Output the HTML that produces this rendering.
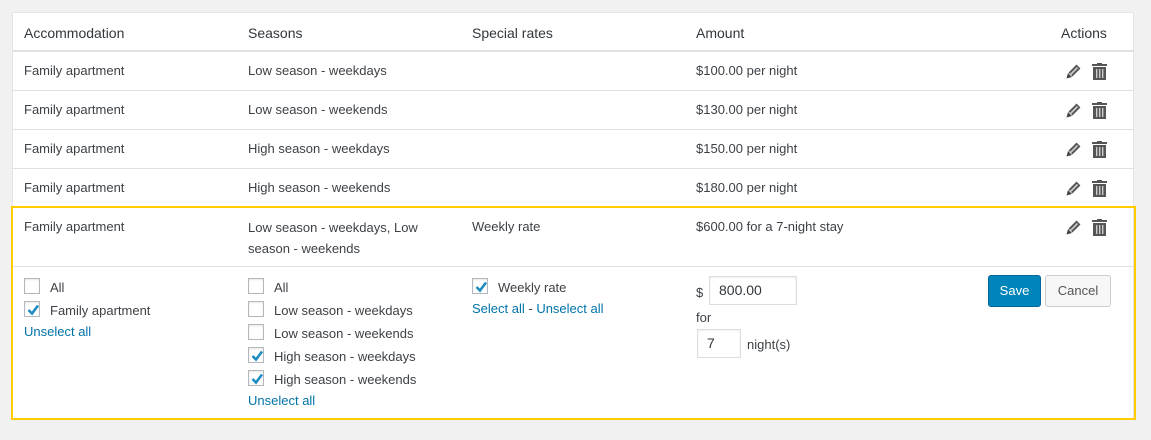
<!DOCTYPE html>
<html><head><meta charset="utf-8"><style>
*{margin:0;padding:0;box-sizing:border-box}
body{width:1151px;height:440px;background:#f1f1f1;font-family:"Liberation Sans",sans-serif;color:#3c4146;font-size:13px;position:relative;overflow:hidden}
.t{position:absolute;white-space:nowrap;line-height:18px}
.tbl{position:absolute;left:12px;top:12px;width:1122px;height:408px;background:#fff;border:1px solid #e5e5e5}
.hl{position:absolute;left:12px;width:1122px;height:1px;background:#e1e1e1}
.h{font-size:14px;color:#32373c}
.cb{position:absolute;width:16px;height:16px;border:1px solid #b4b9be;background:#fff;box-shadow:inset 0 1px 2px rgba(0,0,0,.1)}
.cb svg{position:absolute;left:1px;top:1px}
a{color:#0073aa;text-decoration:none}
.inp{position:absolute;border:1px solid #ddd;background:#fff;box-shadow:inset 0 1px 2px rgba(0,0,0,.07);font-size:14px;padding-left:9px;line-height:26px;color:#32373c}
.btn{position:absolute;border-radius:3px;font-size:13px;text-align:center;line-height:28px}
</style></head><body>
<div class="tbl"></div>
<div class="hl" style="top:50px;height:2px;background:#e1e1e1"></div>
<div class="hl" style="top:90px"></div>
<div class="hl" style="top:129px"></div>
<div class="hl" style="top:168px"></div>
<div style="position:absolute;left:11px;top:206px;width:1125px;height:214px;border:2px solid #fc0"></div>
<div class="hl" style="top:266px;left:13px;width:1121px"></div>

<div class="t h" style="left:24px;top:24px">Accommodation</div>
<div class="t h" style="left:248px;top:24px">Seasons</div>
<div class="t h" style="left:472px;top:24px">Special rates</div>
<div class="t h" style="left:696px;top:24px">Amount</div>
<div class="t h" style="left:1061px;top:24px">Actions</div>

<div class="t" style="left:24px;top:62px">Family apartment</div><div class="t" style="left:248px;top:62px">Low season - weekdays</div><div class="t" style="left:696px;top:62px">$100.00 per night</div>
<div class="t" style="left:24px;top:101px">Family apartment</div><div class="t" style="left:248px;top:101px">Low season - weekends</div><div class="t" style="left:696px;top:101px">$130.00 per night</div>
<div class="t" style="left:24px;top:140px">Family apartment</div><div class="t" style="left:248px;top:140px">High season - weekdays</div><div class="t" style="left:696px;top:140px">$150.00 per night</div>
<div class="t" style="left:24px;top:179px">Family apartment</div><div class="t" style="left:248px;top:179px">High season - weekends</div><div class="t" style="left:696px;top:179px">$180.00 per night</div>
<div class="t" style="left:24px;top:218px">Family apartment</div>
<div class="t" style="left:248px;top:217px;line-height:21px">Low season - weekdays, Low<br>season - weekends</div>
<div class="t" style="left:472px;top:218px">Weekly rate</div>
<div class="t" style="left:696px;top:218px">$600.00 for a 7-night stay</div>

<svg width="0" height="0" style="position:absolute"><defs>
<g id="ic">
<line x1="4.5" y1="11.5" x2="12.5" y2="3.5" stroke="#555" stroke-width="5.5"/>
<line x1="4.5" y1="11.5" x2="11.5" y2="4.5" stroke="#ccc" stroke-width="1.6"/>
<path d="M0.5 15.5 L2 10 L6 14Z" fill="#444"/>
<g transform="translate(26,-1)"><rect x="0" y="2" width="15" height="2" fill="#555"/><rect x="5" y="0" width="5" height="3" fill="#555"/><path d="M1 5 H14 V18 H1Z" fill="#555"/><rect x="4" y="7" width="1.4" height="9" fill="#ccc"/><rect x="7" y="7" width="1.4" height="9" fill="#ccc"/><rect x="10" y="7" width="1.4" height="9" fill="#ccc"/></g>
</g>
<path id="ck" d="M2.5 7 L6 10.5 L12 2.5" stroke="#1e8cbe" stroke-width="2.6" fill="none"/>
</defs></svg>
<svg style="position:absolute;left:1066px;top:63px" width="45" height="20"><use href="#ic"/></svg>
<svg style="position:absolute;left:1066px;top:102px" width="45" height="20"><use href="#ic"/></svg>
<svg style="position:absolute;left:1066px;top:141px" width="45" height="20"><use href="#ic"/></svg>
<svg style="position:absolute;left:1066px;top:180px" width="45" height="20"><use href="#ic"/></svg>
<svg style="position:absolute;left:1066px;top:219px" width="45" height="20"><use href="#ic"/></svg>

<div class="cb" style="left:24px;top:278px"></div><div class="t" style="left:50px;top:279px">All</div>
<div class="cb" style="left:24px;top:301px"><svg width="14" height="14"><use href="#ck"/></svg></div><div class="t" style="left:50px;top:302px">Family apartment</div>
<div class="t" style="left:24px;top:323px"><a>Unselect all</a></div>

<div class="cb" style="left:248px;top:278px"></div><div class="t" style="left:274px;top:279px">All</div>
<div class="cb" style="left:248px;top:301px"></div><div class="t" style="left:274px;top:302px">Low season - weekdays</div>
<div class="cb" style="left:248px;top:324px"></div><div class="t" style="left:274px;top:325px">Low season - weekends</div>
<div class="cb" style="left:248px;top:347px"><svg width="14" height="14"><use href="#ck"/></svg></div><div class="t" style="left:274px;top:348px">High season - weekdays</div>
<div class="cb" style="left:248px;top:370px"><svg width="14" height="14"><use href="#ck"/></svg></div><div class="t" style="left:274px;top:371px">High season - weekends</div>
<div class="t" style="left:248px;top:392px"><a>Unselect all</a></div>

<div class="cb" style="left:472px;top:278px"><svg width="14" height="14"><use href="#ck"/></svg></div><div class="t" style="left:498px;top:279px">Weekly rate</div>
<div class="t" style="left:472px;top:300px"><a>Select all</a> - <a>Unselect all</a></div>

<div class="t" style="left:696px;top:284px">$</div>
<div class="inp" style="left:709px;top:276px;width:88px;height:29px">800.00</div>
<div class="t" style="left:696px;top:309px">for</div>
<div class="inp" style="left:697px;top:329px;width:44px;height:29px">7</div>
<div class="t" style="left:747px;top:336px">night(s)</div>

<div class="btn" style="left:988px;top:275px;width:53px;height:32px;background:#0085ba;border:1px solid #006799;color:#fff;line-height:30px">Save</div>
<div class="btn" style="left:1045px;top:275px;width:66px;height:32px;background:#f7f7f7;border:1px solid #ccc;color:#555;line-height:30px">Cancel</div>
</body></html>
